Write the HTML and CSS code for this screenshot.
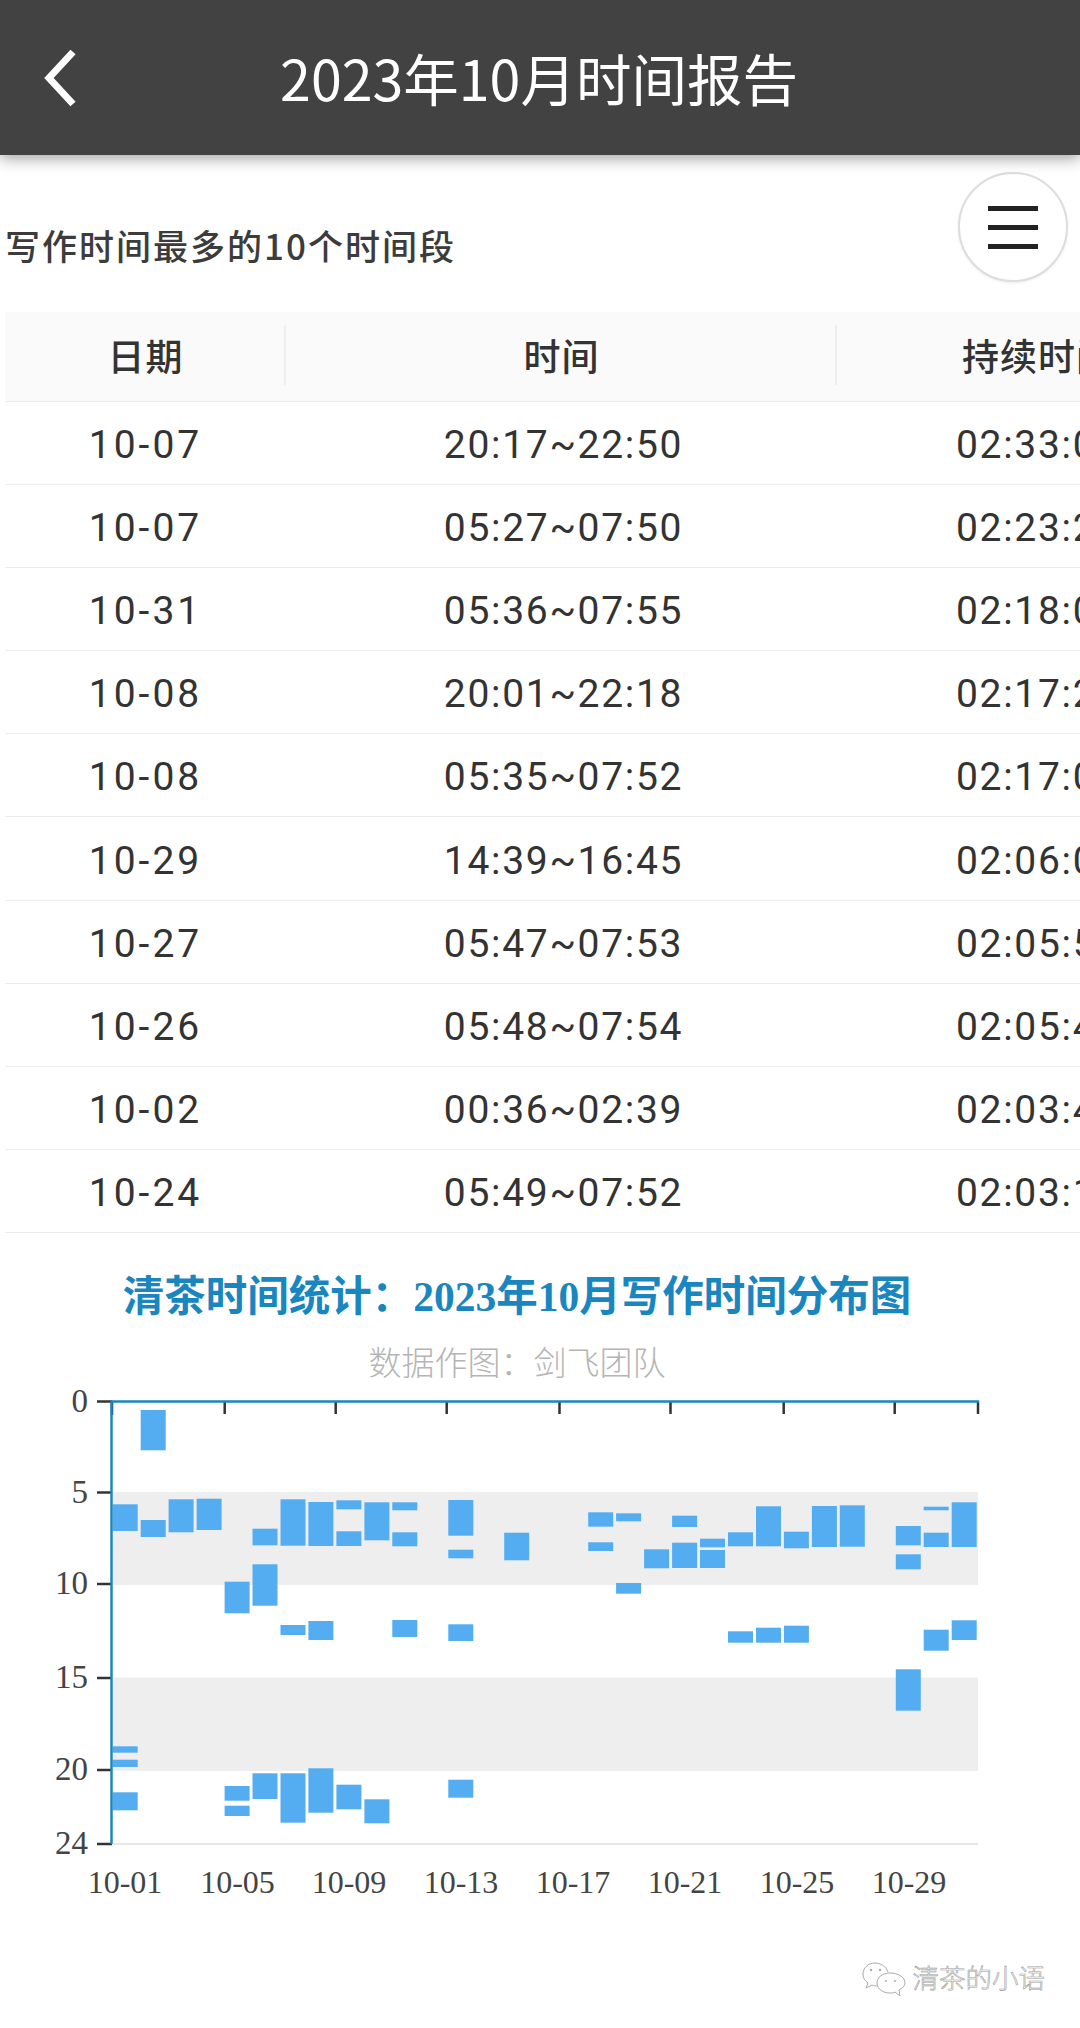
FILE: index.html
```html
<!DOCTYPE html>
<html lang="zh-CN">
<head>
    <meta charset="UTF-8">
    <title>2023年10月时间报告</title>
    <link rel="stylesheet" href="styles.css">
</head>
<body>
<header class="topbar">
    <svg class="back" width="32" height="58" viewBox="0 0 32 58"><path d="M29 3 L5 29 L29 55"/></svg>
    <h1>2023年10月时间报告</h1>
</header>

<div class="section-head">
    <h2>写作时间最多的10个时间段</h2>
    <div class="menu-btn"><span></span><span></span><span></span></div>
</div>

<div class="table">
    <div class="row head"><div>日期</div><div>时间</div><div>持续时间</div></div>
    <div class="row"><div>10-07</div><div>20:17~22:50</div><div>02:33:00</div></div>
    <div class="row"><div>10-07</div><div>05:27~07:50</div><div>02:23:20</div></div>
    <div class="row"><div>10-31</div><div>05:36~07:55</div><div>02:18:00</div></div>
    <div class="row"><div>10-08</div><div>20:01~22:18</div><div>02:17:20</div></div>
    <div class="row"><div>10-08</div><div>05:35~07:52</div><div>02:17:00</div></div>
    <div class="row"><div>10-29</div><div>14:39~16:45</div><div>02:06:00</div></div>
    <div class="row"><div>10-27</div><div>05:47~07:53</div><div>02:05:50</div></div>
    <div class="row"><div>10-26</div><div>05:48~07:54</div><div>02:05:40</div></div>
    <div class="row"><div>10-02</div><div>00:36~02:39</div><div>02:03:40</div></div>
    <div class="row"><div>10-24</div><div>05:49~07:52</div><div>02:03:10</div></div>
</div>

<div class="chart-head">
    <h3>清茶时间统计：2023年10月写作时间分布图</h3>
    <p>数据作图：剑飞团队</p>
</div>

<!-- y轴 0点在1401.5，每小时18.44 / x轴每天27.97 -->
<svg class="chart" width="1080" height="540" viewBox="0 1380 1080 540">
    <rect class="band" x="113" y="1492" width="865" height="93"/>
    <rect class="band" x="113" y="1677.5" width="865" height="93.5"/>
    <line class="floor" x1="113" y1="1844" x2="978" y2="1844"/>

    <!-- 01 -->
    <rect class="bar" x="112.7" y="1504.3" width="25" height="26.7"/>
    <rect class="bar" x="112.7" y="1746.3" width="25" height="6.4"/>
    <rect class="bar" x="112.7" y="1759.7" width="25" height="7.3"/>
    <rect class="bar" x="112.7" y="1792.3" width="25" height="18"/>
    <!-- 02 -->
    <rect class="bar" x="140.7" y="1410" width="25" height="40.3"/>
    <rect class="bar" x="140.7" y="1520" width="25" height="17"/>
    <!-- 03, 04 -->
    <rect class="bar" x="168.6" y="1499.3" width="25" height="33"/>
    <rect class="bar" x="196.6" y="1498.7" width="25" height="31.3"/>
    <!-- 05 -->
    <rect class="bar" x="224.6" y="1581.7" width="25" height="31.6"/>
    <rect class="bar" x="224.6" y="1786" width="25" height="14.7"/>
    <rect class="bar" x="224.6" y="1805.7" width="25" height="10.3"/>
    <!-- 06 -->
    <rect class="bar" x="252.5" y="1528.7" width="25" height="16.6"/>
    <rect class="bar" x="252.5" y="1564.3" width="25" height="41.4"/>
    <rect class="bar" x="252.5" y="1773.3" width="25" height="25.7"/>
    <!-- 07 -->
    <rect class="bar" x="280.5" y="1499.3" width="25" height="46.4"/>
    <rect class="bar" x="280.5" y="1625" width="25" height="10"/>
    <rect class="bar" x="280.5" y="1773.3" width="25" height="49.4"/>
    <!-- 08 -->
    <rect class="bar" x="308.4" y="1502" width="25" height="44"/>
    <rect class="bar" x="308.4" y="1621" width="25" height="19"/>
    <rect class="bar" x="308.4" y="1768.3" width="25" height="44.4"/>
    <!-- 09 -->
    <rect class="bar" x="336.4" y="1500.3" width="25" height="9"/>
    <rect class="bar" x="336.4" y="1531.3" width="25" height="14.7"/>
    <rect class="bar" x="336.4" y="1784.7" width="25" height="24.6"/>
    <!-- 10 -->
    <rect class="bar" x="364.4" y="1502.3" width="25" height="38"/>
    <rect class="bar" x="364.4" y="1799.3" width="25" height="24"/>
    <!-- 11 -->
    <rect class="bar" x="392.3" y="1502.3" width="25" height="8"/>
    <rect class="bar" x="392.3" y="1532.3" width="25" height="14"/>
    <rect class="bar" x="392.3" y="1620" width="25" height="17"/>
    <!-- 13 -->
    <rect class="bar" x="448.3" y="1500" width="25" height="35.7"/>
    <rect class="bar" x="448.3" y="1549.7" width="25" height="8.6"/>
    <rect class="bar" x="448.3" y="1624.3" width="25" height="16.7"/>
    <rect class="bar" x="448.3" y="1779.7" width="25" height="18"/>
    <!-- 15 -->
    <rect class="bar" x="504.2" y="1532.7" width="25" height="27.6"/>
    <!-- 18 -->
    <rect class="bar" x="588.2" y="1512.3" width="25" height="14.4"/>
    <rect class="bar" x="588.2" y="1542.3" width="25" height="8.7"/>
    <!-- 19 -->
    <rect class="bar" x="616.1" y="1513.3" width="25" height="8"/>
    <rect class="bar" x="616.1" y="1583" width="25" height="10.7"/>
    <!-- 20 -->
    <rect class="bar" x="644.1" y="1549.3" width="25" height="19"/>
    <!-- 21 -->
    <rect class="bar" x="672.1" y="1515.7" width="25" height="11.3"/>
    <rect class="bar" x="672.1" y="1542.7" width="25" height="25.3"/>
    <!-- 22 -->
    <rect class="bar" x="700" y="1538.7" width="25" height="8.6"/>
    <rect class="bar" x="700" y="1550" width="25" height="18"/>
    <!-- 23 -->
    <rect class="bar" x="728" y="1532.3" width="25" height="14"/>
    <rect class="bar" x="728" y="1631.3" width="25" height="11.4"/>
    <!-- 24 -->
    <rect class="bar" x="756" y="1506.3" width="25" height="40"/>
    <rect class="bar" x="756" y="1627.7" width="25" height="15"/>
    <!-- 25 -->
    <rect class="bar" x="783.9" y="1531.7" width="25" height="16.6"/>
    <rect class="bar" x="783.9" y="1625.7" width="25" height="17"/>
    <!-- 26, 27 -->
    <rect class="bar" x="811.9" y="1506" width="25" height="41"/>
    <rect class="bar" x="839.8" y="1505.3" width="25" height="41.4"/>
    <!-- 29 -->
    <rect class="bar" x="895.8" y="1526" width="25" height="19.3"/>
    <rect class="bar" x="895.8" y="1554.3" width="25" height="15"/>
    <rect class="bar" x="895.8" y="1669.3" width="25" height="41.4"/>
    <!-- 30 -->
    <rect class="bar" x="923.7" y="1506.7" width="25" height="3.6"/>
    <rect class="bar" x="923.7" y="1532.7" width="25" height="14.3"/>
    <rect class="bar" x="923.7" y="1629.7" width="25" height="21"/>
    <!-- 31 -->
    <rect class="bar" x="951.7" y="1502.3" width="25" height="44.7"/>
    <rect class="bar" x="951.7" y="1620.3" width="25" height="19.7"/>

    <!-- 坐标轴 -->
    <line class="tick" x1="97" y1="1401.5" x2="112" y2="1401.5"/>
    <line class="tick" x1="97" y1="1492.5" x2="112" y2="1492.5"/>
    <line class="tick" x1="97" y1="1584" x2="112" y2="1584"/>
    <line class="tick" x1="97" y1="1678" x2="112" y2="1678"/>
    <line class="tick" x1="97" y1="1770" x2="112" y2="1770"/>
    <line class="tick" x1="97" y1="1844" x2="112" y2="1844"/>
    <line class="tick" x1="112" y1="1401" x2="112" y2="1415"/>
    <line class="tick" x1="224.7" y1="1401" x2="224.7" y2="1414"/>
    <line class="tick" x1="335.7" y1="1401" x2="335.7" y2="1414"/>
    <line class="tick" x1="446.7" y1="1401" x2="446.7" y2="1414"/>
    <line class="tick" x1="559.5" y1="1401" x2="559.5" y2="1414"/>
    <line class="tick" x1="670.5" y1="1401" x2="670.5" y2="1414"/>
    <line class="tick" x1="783.7" y1="1401" x2="783.7" y2="1414"/>
    <line class="tick" x1="894.7" y1="1401" x2="894.7" y2="1414"/>
    <line class="tick" x1="978" y1="1401" x2="978" y2="1414"/>
    <line class="axis" x1="111" y1="1401.5" x2="979" y2="1401.5"/>
    <line class="axis" x1="111.5" y1="1401" x2="111.5" y2="1844"/>

    <text class="y-label" x="88" y="1412">0</text>
    <text class="y-label" x="88" y="1503">5</text>
    <text class="y-label" x="88" y="1594">10</text>
    <text class="y-label" x="88" y="1688">15</text>
    <text class="y-label" x="88" y="1780">20</text>
    <text class="y-label" x="88" y="1854">24</text>

    <text class="x-label" x="125" y="1893">10-01</text>
    <text class="x-label" x="237.5" y="1893">10-05</text>
    <text class="x-label" x="349" y="1893">10-09</text>
    <text class="x-label" x="461" y="1893">10-13</text>
    <text class="x-label" x="573" y="1893">10-17</text>
    <text class="x-label" x="685" y="1893">10-21</text>
    <text class="x-label" x="797" y="1893">10-25</text>
    <text class="x-label" x="909" y="1893">10-29</text>
</svg>

<div class="footer">
    <svg class="wx" width="44" height="36" viewBox="0 0 44 36">
        <path d="M26 10 C24 4 18 1 13 1 C6 1 1 6 1 12 C1 16 3 19 6 21 L4 26 L10 23 C12 24 14 24 16 24"/>
        <path d="M28 11 C21 11 15 15 15 21 C15 27 21 31 28 31 C30 31 32 31 33 30 L38 34 L37 28 C40 26 43 24 43 21 C43 15 36 11 28 11 Z"/>
        <circle cx="9" cy="8" r="1.2"/><circle cx="18" cy="8" r="1.2"/>
        <circle cx="24" cy="19" r="1"/><circle cx="33" cy="19" r="1"/>
    </svg>
    <span>清茶的小语</span>
</div>
</body>
</html>
```

FILE: styles.css
```css
* {
    padding: 0;
    margin: 0;
    box-sizing: border-box;
}

html, body {
    width: 1080px;
    height: 2028px;
    overflow: hidden;
    background: #fff;
}

body {
    font-family: "Noto Sans CJK SC", "Noto Sans", sans-serif;
    color: #333;
}

/* 顶部标题栏 */
.topbar {
    position: relative;
    height: 155px;
    background: #424242;
    box-shadow: 0 4px 14px rgba(0, 0, 0, 0.35);
    display: flex;
    align-items: center;
    justify-content: center;
}

.topbar h1 {
    font-size: 55.5px;
    font-weight: 400;
    color: #fff;
    line-height: 1;
    margin-left: -2px;
}

.back {
    position: absolute;
    left: 44px;
    top: 49px;
}

.back path {
    fill: none;
    stroke: #fff;
    stroke-width: 7;
}

.section-head {
    height: 157px;
    padding: 17px 12px 30px 5px;
    display: flex;
    justify-content: space-between;
    align-items: flex-end;
}

.section-head h2 {
    font-size: 35px;
    font-weight: 500;
    letter-spacing: 2px;
    line-height: 44px;
    color: #3c3c3c;
    margin-bottom: 15px;
}

.menu-btn {
    width: 110px;
    height: 110px;
    border-radius: 50%;
    border: 2px solid #ddd;
    background: #fff;
    box-shadow: 0 1px 3px rgba(0, 0, 0, 0.08);
    display: flex;
    flex-direction: column;
    align-items: center;
    justify-content: center;
    gap: 14px;
}

.menu-btn span {
    width: 50px;
    height: 5px;
    background: #222;
}

/* 表格，右边超出屏幕 */
.table {
    margin-left: 5px;
    width: 1075px;
    overflow: hidden;
}

.row {
    display: grid;
    grid-template-columns: 281px 551px 402px;
    height: 83.1px;
    padding-top: 4px;
    border-bottom: 1px solid #ececec;
    font-family: Roboto, "Noto Sans CJK SC", sans-serif;
    font-size: 39px;
    letter-spacing: 1.7px;
    color: #333;
}

.row > div {
    display: flex;
    align-items: center;
    justify-content: center;
    white-space: nowrap;
}

.row > div:first-child {
    letter-spacing: 3px;
}

.row > div:nth-child(2) {
    padding-left: 4px;
}

.row.head {
    height: 90px;
    padding-top: 0;
    padding-bottom: 3px;
    background: #fafafa;
    font-family: "Noto Sans CJK SC", sans-serif;
    font-size: 37px;
    font-weight: 500;
    letter-spacing: 1px;
}

.row.head > div {
    position: relative;
    letter-spacing: 1px;
    padding-left: 0;
}

.row.head > div::after {
    content: "";
    position: absolute;
    right: 0;
    top: 13px;
    bottom: 13px;
    width: 2px;
    background: #eee;
}

.chart-head {
    height: 147px;
    padding-top: 37px;
    text-align: center;
}

.chart-head h3 {
    font-family: "Liberation Serif", "Noto Sans CJK SC", serif;
    font-size: 41.5px;
    font-weight: 700;
    line-height: 54px;
    color: #1a86bf;
    margin-left: -46px;
}

.chart-head p {
    font-size: 33px;
    font-weight: 300;
    line-height: 44px;
    margin-top: 15px;
    color: #b5b5b5;
    margin-left: -46px;
}

.chart {
    display: block;
}

.band {
    fill: #eeeeee;
}

.floor {
    stroke: #e6e6e6;
    stroke-width: 2;
}

.bar {
    fill: #54adf0;
}

.tick {
    stroke: #333;
    stroke-width: 2.5;
}

.axis {
    stroke: #1a86bf;
    stroke-width: 2.5;
}

.y-label, .x-label {
    font-family: "Liberation Serif", serif;
    fill: #444;
}

.y-label {
    font-size: 33px;
    text-anchor: end;
}

.x-label {
    font-size: 32px;
    text-anchor: middle;
}

/* 公众号水印 */
.footer {
    height: 108px;
    padding: 40px 35px 0 0;
    display: flex;
    justify-content: flex-end;
    align-items: flex-start;
    gap: 7px;
}

.wx {
    margin-top: 2px;
}

.wx path {
    fill: #fff;
    stroke: #aaa;
    stroke-width: 1;
}

.wx circle {
    fill: #aaa;
}

.footer span {
    font-size: 26.5px;
    font-weight: 300;
    line-height: 34px;
    color: #fff;
    -webkit-text-stroke: 0.6px #9a9a9a;
}
```
